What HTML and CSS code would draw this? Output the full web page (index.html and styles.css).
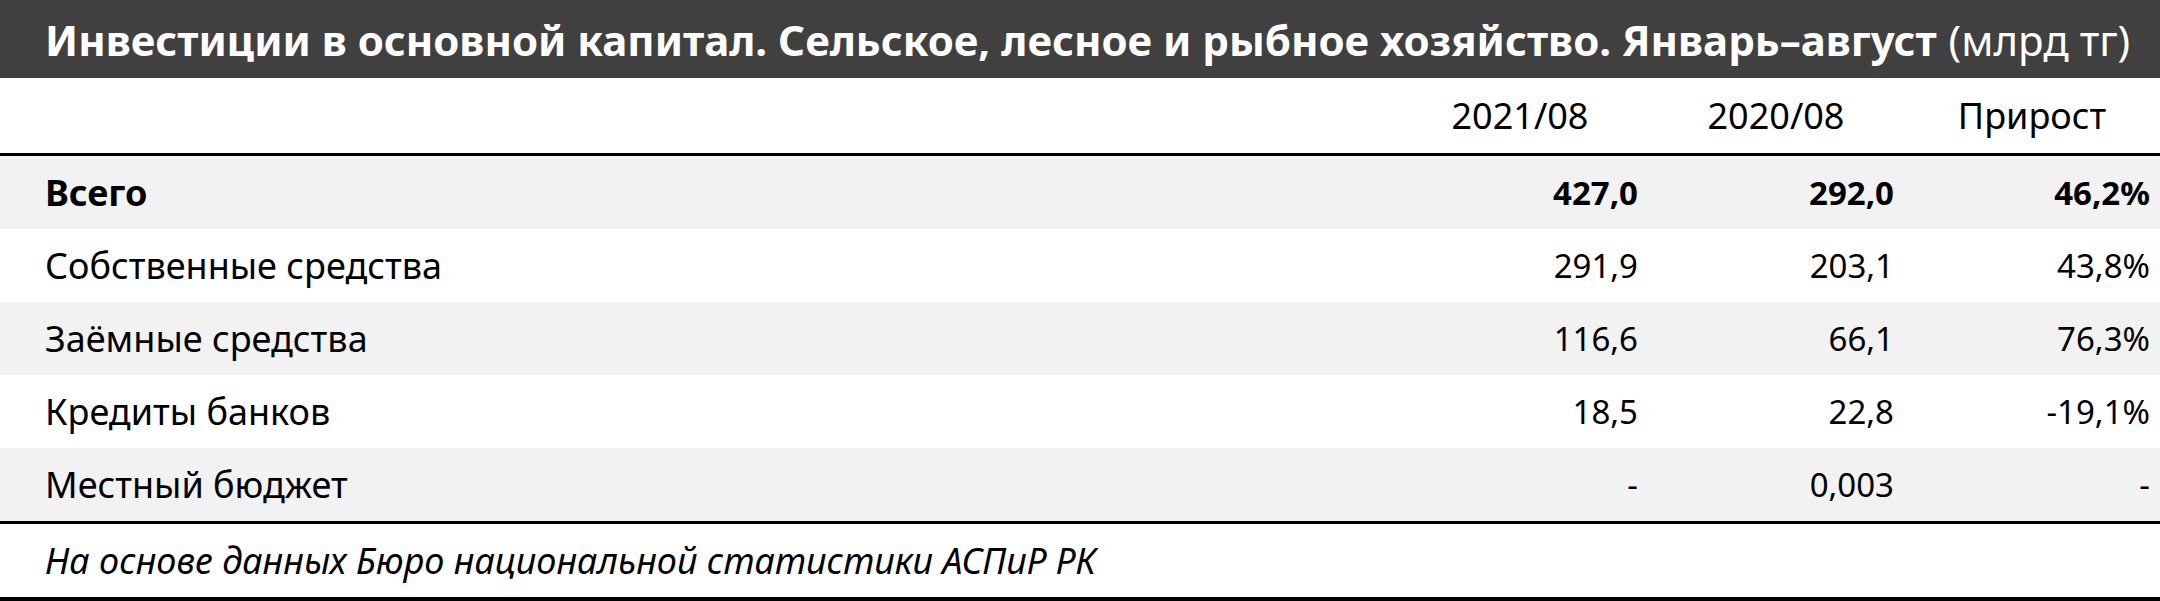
FILE: index.html
```html
<!DOCTYPE html>
<html lang="ru">
<head>
<meta charset="utf-8">
<link rel="stylesheet" href="styles.css">
</head>
<body>
<div class="sheet">
  <div class="title"><span class="title-main">Инвестиции в основной капитал. Сельское, лесное и рыбное хозяйство. Январь–август</span> <span class="unit">(млрд тг)</span></div>
  <div class="row head">
    <div class="cell label"></div>
    <div class="cell ctr">2021/08</div>
    <div class="cell ctr">2020/08</div>
    <div class="cell ctr">Прирост</div>
  </div>
  <div class="row alt bold">
    <div class="cell label">Всего</div>
    <div class="cell num">427,0</div>
    <div class="cell num">292,0</div>
    <div class="cell num">46,2%</div>
  </div>
  <div class="row">
    <div class="cell label">Собственные средства</div>
    <div class="cell num">291,9</div>
    <div class="cell num">203,1</div>
    <div class="cell num">43,8%</div>
  </div>
  <div class="row alt">
    <div class="cell label">Заёмные средства</div>
    <div class="cell num">116,6</div>
    <div class="cell num">66,1</div>
    <div class="cell num">76,3%</div>
  </div>
  <div class="row">
    <div class="cell label">Кредиты банков</div>
    <div class="cell num">18,5</div>
    <div class="cell num">22,8</div>
    <div class="cell num">-19,1%</div>
  </div>
  <div class="row alt last">
    <div class="cell label">Местный бюджет</div>
    <div class="cell num">-</div>
    <div class="cell num">0,003</div>
    <div class="cell num">-</div>
  </div>
  <div class="foot">На основе данных Бюро национальной статистики АСПиР РК</div>
</div>
</body>
</html>
```

FILE: styles.css
```css
html, body {
  margin: 0;
  padding: 0;
  background: #ffffff;
}
body {
  font-family: "Noto Sans", "Open Sans", sans-serif;
  color: #000000;
}
.sheet {
  width: 2160px;
  height: 601px;
  overflow: hidden;
}
.title {
  height: 78px;
  background: #404040;
  color: #ffffff;
  font-size: 42px;
  padding-left: 45px;
  display: flex;
  align-items: center;
  white-space: nowrap;
}
.title-main {
  font-weight: 700;
}
.unit {
  font-weight: 400;
  margin-left: 12px;
}
.row {
  display: grid;
  grid-template-columns: 1392px 256px 256px 256px;
  height: 73px;
  align-items: center;
  font-size: 36px;
}
.row.head {
  height: 75px;
  border-bottom: 3px solid #000000;
}
.row.alt {
  background: #f2f2f2;
}
.row.bold {
  font-weight: 700;
}
.row.last {
  border-bottom: 3px solid #000000;
}
.cell {
  white-space: nowrap;
}
.label {
  padding-left: 45px;
}
.ctr {
  text-align: center;
}
.num {
  text-align: right;
  padding-right: 10px;
  font-size: 33px;
}
.foot {
  height: 73px;
  border-bottom: 4px solid #000000;
  display: flex;
  align-items: center;
  padding-left: 45px;
  font-size: 36px;
  font-style: italic;
}
```
